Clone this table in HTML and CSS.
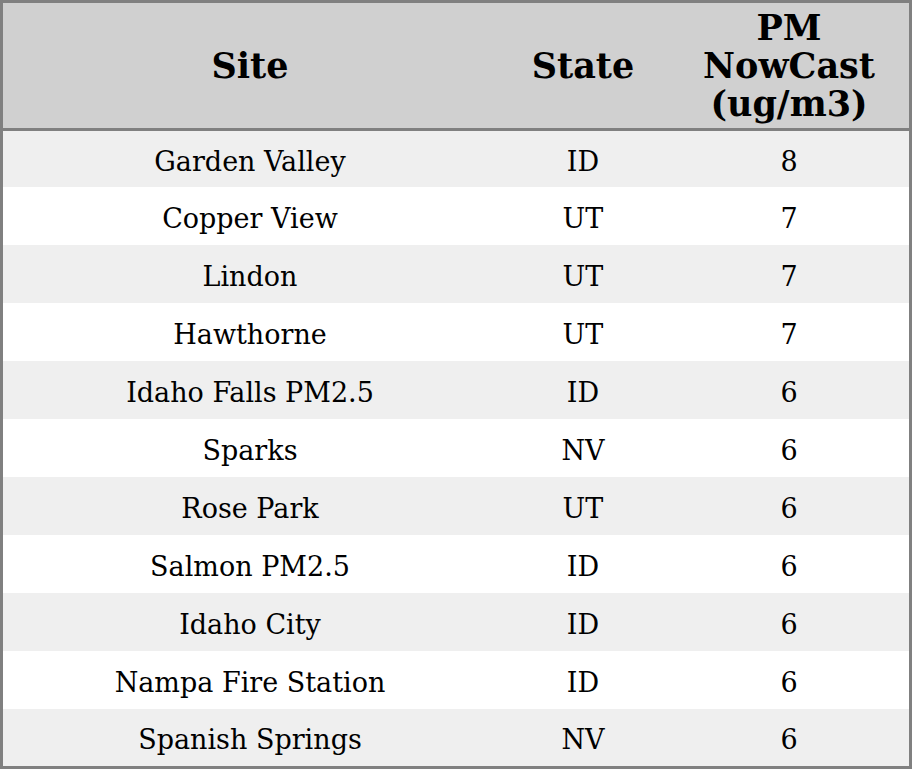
FILE: index.html
```html
<!DOCTYPE html>
<html>
<head>
<meta charset="utf-8">
<link rel="stylesheet" href="styles.css">
</head>
<body>
<table class="aq">
  <thead>
    <tr class="head">
      <th class="c-site">Site</th>
      <th class="c-state">State</th>
      <th class="c-pm">PM<br>NowCast<br>(ug/m3)</th>
    </tr>
  </thead>
  <tbody>
    <tr class="r first"><td>Garden Valley</td><td>ID</td><td>8</td></tr>
    <tr class="r"><td>Copper View</td><td>UT</td><td>7</td></tr>
    <tr class="r"><td>Lindon</td><td>UT</td><td>7</td></tr>
    <tr class="r"><td>Hawthorne</td><td>UT</td><td>7</td></tr>
    <tr class="r"><td>Idaho Falls PM2.5</td><td>ID</td><td>6</td></tr>
    <tr class="r"><td>Sparks</td><td>NV</td><td>6</td></tr>
    <tr class="r"><td>Rose Park</td><td>UT</td><td>6</td></tr>
    <tr class="r"><td>Salmon PM2.5</td><td>ID</td><td>6</td></tr>
    <tr class="r"><td>Idaho City</td><td>ID</td><td>6</td></tr>
    <tr class="r"><td>Nampa Fire Station</td><td>ID</td><td>6</td></tr>
    <tr class="r last"><td>Spanish Springs</td><td>NV</td><td>6</td></tr>
  </tbody>
</table>
</body>
</html>
```
FILE: styles.css
```css
html, body {
  margin: 0;
  padding: 0;
  background: #ffffff;
}
.aq {
  width: 912px;
  border-collapse: separate;
  border-spacing: 0;
  border: 3px solid #808080;
  box-sizing: border-box;
  font-family: "DejaVu Serif", serif;
  color: #000;
  table-layout: fixed;
}
.c-site { width: 494px; }
.c-state { width: 172px; }
.c-pm { width: 240px; }
.head th {
  background: #d0d0d0;
  height: 125px;
  padding: 0;
  font-size: 35px;
  font-weight: bold;
  line-height: 38px;
  text-align: center;
  vertical-align: middle;
  border-bottom: 3px solid #808080;
}
.r td {
  height: 54px;
  padding: 4px 0 0 0;
  text-align: center;
  vertical-align: middle;
  font-size: 27px;
}
.r.first td { height: 52px; }
.r.last td { height: 53px; }
.r:nth-child(odd) td { background: #efefef; }
.r:nth-child(even) td { background: #ffffff; }
```
